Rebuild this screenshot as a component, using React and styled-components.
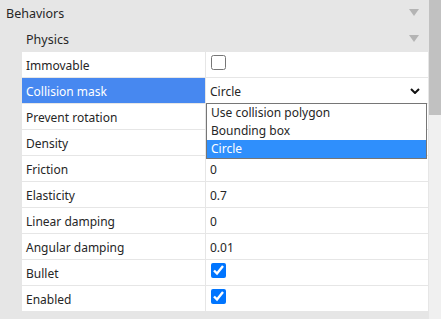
import React from "react";
import styled, { createGlobalStyle } from "styled-components";

const GlobalStyle = createGlobalStyle`
  body {
    margin: 0;
    background-color: #e6e6e6;
    font-family: "Noto Sans", "Open Sans", sans-serif;
    font-size: 12px;
    color: #262626;
  }
`;

const Frame = styled.div`
  display: flex;
  width: 441px;
  height: 319px;
  overflow: hidden;
`;

const Content = styled.div`
  flex: 1;
  display: flex;
  flex-direction: column;
`;

const SectionHeader = styled.div`
  display: flex;
  align-items: center;
  justify-content: space-between;
  height: 26px;
  font-size: 12.5px;
  padding-left: ${(p) => (p.$depth === 1 ? 26 : 6)}px;
  padding-right: 10px;
`;

const Caret = styled.span`
  width: 0;
  height: 0;
  border-left: 5px solid transparent;
  border-right: 5px solid transparent;
  border-top: 7px solid #b4b4b4;
  margin-top: -2px;
`;

const Table = styled.div`
  display: flex;
  flex-direction: column;
  gap: 1px;
  margin-left: 22px;
  margin-right: 1px;
`;

const Row = styled.div`
  display: grid;
  grid-template-columns: 183px 1fr;
  gap: 1px;
  height: 25px;
`;

const Label = styled.div`
  display: flex;
  align-items: center;
  padding: 2px 0 0 4px;
  background-color: ${(p) => (p.$active ? "#4788f0" : "#ffffff")};
  color: ${(p) => (p.$active ? "#ffffff" : "#262626")};
`;

const Value = styled.div`
  position: relative;
  display: flex;
  align-items: center;
  justify-content: space-between;
  padding: 2px 4px 0;
  background-color: #ffffff;
`;

const Check = styled.input`
  width: 15px;
  height: 15px;
  margin: 0 0 6px 1px;
  accent-color: #0075ff;
`;

const Chevron = styled.svg`
  width: 10px;
  height: 6px;
  margin: 0 4px 2px 0;
`;

const Popup = styled.ul`
  position: absolute;
  top: 100%;
  left: 0;
  right: 1px;
  margin: 0;
  padding: 0;
  list-style: none;
  background-color: #ffffff;
  border: 1px solid #767676;
  z-index: 2;
`;

const Option = styled.li`
  height: 18px;
  line-height: 18px;
  padding-left: 4px;
  background-color: ${(p) => (p.$selected ? "#2f8ffc" : "transparent")};
  color: ${(p) => (p.$selected ? "#ffffff" : "#262626")};
`;

const ScrollTrack = styled.div`
  width: 12px;
  background-color: #f0f0f0;
`;

const Thumb = styled.div`
  height: 115px;
  background-color: #c1c1c1;
`;

const options = ["Use collision polygon", "Bounding box", "Circle"];

const rows = [
  { label: "Immovable", type: "check", value: false },
  { label: "Collision mask", type: "select", value: "Circle" },
  { label: "Prevent rotation", type: "text", value: "" },
  { label: "Density", type: "text", value: "" },
  { label: "Friction", type: "text", value: "0" },
  { label: "Elasticity", type: "text", value: "0.7" },
  { label: "Linear damping", type: "text", value: "0" },
  { label: "Angular damping", type: "text", value: "0.01" },
  { label: "Bullet", type: "check", value: true },
  { label: "Enabled", type: "check", value: true },
];

const renderValue = (r) => {
  if (r.type === "check") {
    return <Check type="checkbox" defaultChecked={r.value} />;
  }
  if (r.type === "select") {
    return (
      <>
        <span>{r.value}</span>
        <Chevron viewBox="0 0 10 6">
          <path d="M1 1 L5 5 L9 1" fill="none" stroke="#111" strokeWidth="2" />
        </Chevron>
        <Popup>
          {options.map((o) => (
            <Option key={o} $selected={o === r.value}>
              {o}
            </Option>
          ))}
        </Popup>
      </>
    );
  }
  return r.value;
};

const App = () => {
  return (
    <Frame>
      <GlobalStyle />
      <Content>
        <SectionHeader>
          Behaviors
          <Caret />
        </SectionHeader>
        <SectionHeader $depth={1}>
          Physics
          <Caret />
        </SectionHeader>
        <Table>
          {rows.map((r) => (
            <Row key={r.label}>
              <Label $active={r.type === "select"}>{r.label}</Label>
              <Value>{renderValue(r)}</Value>
            </Row>
          ))}
        </Table>
      </Content>
      <ScrollTrack>
        <Thumb />
      </ScrollTrack>
    </Frame>
  );
};

export default App;
